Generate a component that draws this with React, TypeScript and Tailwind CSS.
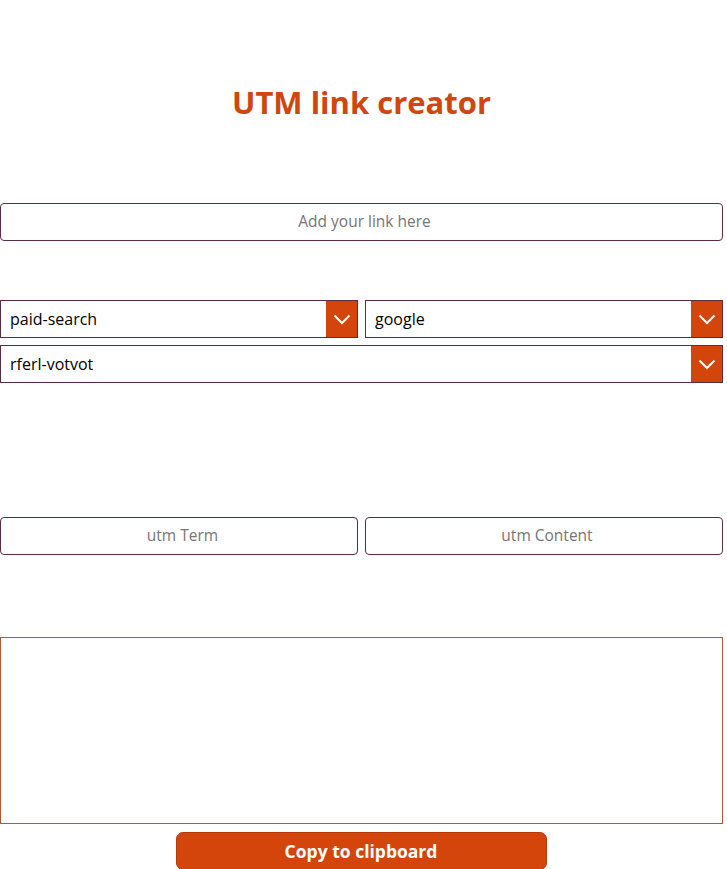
import React from "react";

function Chevron() {
  return (
    <svg width="18" height="11" viewBox="0 0 18 11" fill="none">
      <path d="M1.5 1.5 L9 9 L16.5 1.5" stroke="white" strokeWidth="2" />
    </svg>
  );
}

function Select({ value, className }: { value: string; className: string }) {
  return (
    <div className={`flex h-[38px] items-stretch border border-[#5a2d44] bg-white ${className}`}>
      <div className="flex flex-1 items-center pl-[9px] text-[16px] text-black">{value}</div>
      <div className="flex w-[31px] items-center justify-center bg-[#d4450c]">
        <Chevron />
      </div>
    </div>
  );
}

export default function App() {
  return (
    <div className="h-[869px] w-[727px] overflow-hidden bg-white" style={{ fontFamily: '"Open Sans", sans-serif' }}>
      <div className="w-[723px]">
        <h1 className="pt-[80px] text-center text-[31px] font-bold leading-[44px] text-[#d1450f]">UTM link creator</h1>
        <div className="mt-[79px] flex h-[38px] items-center justify-center rounded-[4px] border border-[#5a2d44] pl-[6px] text-[15.5px] text-[#767676]">
          Add your link here
        </div>
        <div className="mt-[59px] flex gap-[7px]">
          <Select value="paid-search" className="w-[358px]" />
          <Select value="google" className="flex-1" />
        </div>
        <Select value="rferl-votvot" className="mt-[7px] w-full" />
        <div className="mt-[134px] flex gap-[7px]">
          <div className="flex h-[38px] w-[358px] items-center justify-center rounded-[4px] border border-[#5a2d44] pl-[7px] text-[15.5px] text-[#767676]">
            utm Term
          </div>
          <div className="flex h-[38px] flex-1 items-center justify-center rounded-[4px] border border-[#5a2d44] pl-[6px] text-[15.5px] text-[#767676]">
            utm Content
          </div>
        </div>
        <div className="mt-[82px] h-[187px] border border-[#b5582e]" />
        <div className="mt-[8px] flex justify-center">
          <button className="ml-[-1px] h-[38px] w-[371px] rounded-[7px] border border-[#b53a0a] bg-[#d4450c] text-[17.5px] font-bold text-white">
            Copy to clipboard
          </button>
        </div>
      </div>
    </div>
  );
}
